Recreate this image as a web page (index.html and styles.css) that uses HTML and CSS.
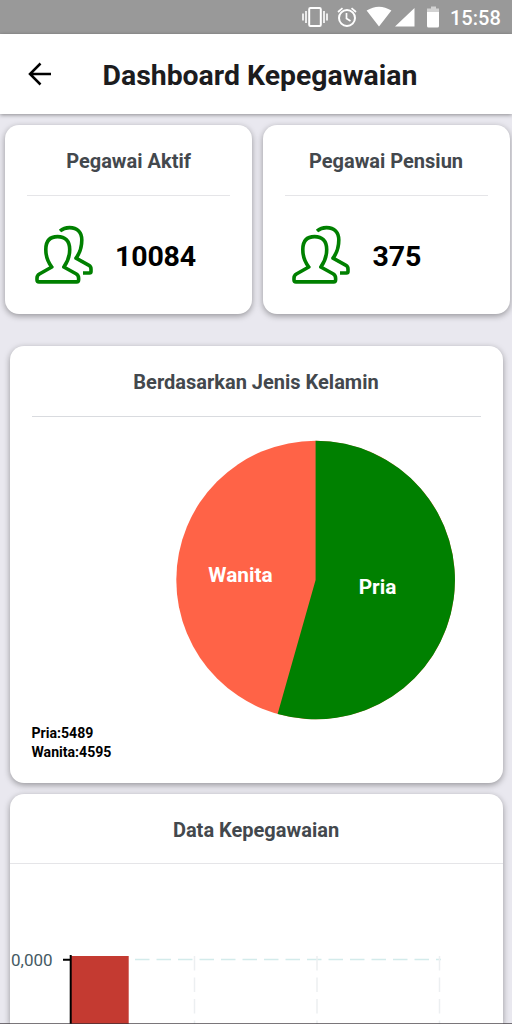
FILE: index.html
```html
<!DOCTYPE html>
<html lang="id">
<head>
<meta charset="utf-8">
<title>Dashboard Kepegawaian</title>
<link rel="stylesheet" href="styles.css">
</head>
<body>
<svg class="defs" width="0" height="0" aria-hidden="true">
  <symbol id="people" viewBox="0 0 70 70">
    <path d="M30 11C33 8.4 36 7.6 39.5 7.6C47.5 7.6 51.8 12.5 51.8 20C51.8 28 50.3 32.5 46 38.2L59 45.3Q61 46.5 61 49V51.5Q61 53 59.5 53H53"/>
    <path d="M21.8 47C17 41 15.8 36 15.8 29.5C15.8 21 20 16.6 27.6 16.6C35.2 16.6 39.7 21 39.7 29.5C39.7 36 38.3 41 33.8 47L46 53.8Q48.6 55.3 48.6 58V60Q48.6 61.9 46.6 61.9H9Q7 61.9 7 60V58Q7 55.5 9.4 54Z"/>
  </symbol>
</svg>
<header class="status">
  <svg class="status-icons" width="142" height="34" viewBox="0 0 142 34">
    <g fill="none" stroke="#fff">
      <rect x="9.2" y="8" width="11.6" height="18" rx="1.2" stroke-width="2"/>
      <path d="M6 11V23M3 13.5V20.5M24 11V23M27 13.5V20.5" stroke-width="1.6"/>
      <circle cx="47" cy="18" r="8" stroke-width="2"/>
      <path d="M46.5 13V18.5L50.5 21M38 12L42.5 8.2M51.5 8.2L56 12" stroke-width="1.7"/>
    </g>
    <path fill="#fff" d="M66.6 10.5Q79 2.8 91.4 10.5L79 26.5ZM95 26.5L114.5 8V26.5Z"/>
    <path fill="#d2d2d2" d="M131 6.5H136V8.5H139V12H127V8.5H131Z"/>
    <path fill="#fff" d="M127 12H139V26Q139 27.5 137.5 27.5H128.5Q127 27.5 127 26Z"/>
  </svg>
  <span class="clock">15:58</span>
</header>
<nav class="appbar">
  <svg class="back" width="24" height="24" viewBox="0 0 24 24"><path d="M23 12H2M12.5 1.5L2 12L12.5 22.5"/></svg>
  <h1>Dashboard Kepegawaian</h1>
</nav>
<main>
  <div class="stats">
    <section class="card stat">
      <h2>Pegawai Aktif</h2>
      <div class="stat-row"><svg class="people"><use href="#people"/></svg><strong>10084</strong></div>
    </section>
    <section class="card stat">
      <h2>Pegawai Pensiun</h2>
      <div class="stat-row"><svg class="people"><use href="#people"/></svg><strong>375</strong></div>
    </section>
  </div>
  <section class="card gender">
    <h2>Berdasarkan Jenis Kelamin</h2>
    <svg class="pie" width="280" height="280" viewBox="0 0 280 280">
      <circle cx="139.6" cy="140" r="139.3" fill="tomato"/>
      <path d="M139.6 140V.7A139.3 139.3 0 1 1 101.6 274Z" fill="green"/>
      <text x="64.5" y="142">Wanita</text>
      <text x="201.5" y="153.5">Pria</text>
    </svg>
    <p>Pria:5489<br>Wanita:4595</p>
  </section>
  <section class="card data">
    <h2>Data Kepegawaian</h2>
    <svg class="bars" width="493" height="160" viewBox="0 0 493 160">
      <path class="grid-h" d="M61.5 95.5H432"/>
      <path class="grid-v" d="M185.5 92V160M308 92V160M430.5 92V160"/>
      <rect x="61" y="92" width="58.7" height="68" fill="#c43a31"/>
      <path class="axis" d="M61.7 91V160M54 95.7H61"/>
      <text x="2" y="101.5">0,000</text>
    </svg>
  </section>
</main>
<div class="navline"></div>
</body>
</html>
```

FILE: styles.css
```css
* { box-sizing: border-box; margin: 0; }
body {
  width: 512px;
  height: 1024px;
  overflow: hidden;
  display: flex;
  flex-direction: column;
  position: relative;
  background: #e9e8ef;
  font-family: Roboto, sans-serif;
}
.defs { position: absolute; }
.status {
  height: 34px;
  flex: none;
  display: flex;
  align-items: center;
  padding-left: 300px;
  background: #999;
  color: #fff;
}
.clock { margin-left: 8px; padding-top: 2px; font-size: 20px; font-weight: 500; }
.appbar {
  height: 80px;
  flex: none;
  display: flex;
  align-items: center;
  padding-left: 28px;
  background: #fff;
  box-shadow: 0 1px 4px rgba(0, 0, 0, .4);
}
.back { fill: none; stroke: #000; stroke-width: 2.5; }
h1 { margin-left: 50.5px; padding-top: 3px; color: #1c1c1e; font-size: 28.4px; font-weight: 700; white-space: nowrap; }
main { flex: 1; min-height: 0; display: flex; flex-direction: column; padding-top: 11px; }
.stats { flex: none; display: grid; grid-template-columns: 247px 247px; gap: 10.5px; padding-left: 5px; }
.card {
  background: #fff;
  border-radius: 14px;
  box-shadow: 0 2px 6px rgba(0, 0, 0, .36);
}
h2 { color: #43484d; font-size: 20px; font-weight: 700; line-height: 24px; text-align: center; }
.stat { height: 189px; padding: 24px 22px 0; }
.stat h2, .gender h2 { height: 47px; border-bottom: 1px solid #e1e8ee; }
.stat h2 { border-color: #e5e5e8; }
.stat-row { display: flex; align-items: center; height: 119px; margin-left: 2.6px; }
.people { width: 70px; height: 70px; margin-bottom: 2px; fill: none; stroke: green; stroke-width: 3.6; stroke-linejoin: round; }
.stat-row strong { margin-left: 15.5px; padding-top: 1px; font-size: 28.5px; font-weight: 700; letter-spacing: -.2px; }
.gender { flex: none; height: 436.5px; margin: 32px 9.5px 0; padding: 24px 22px 0; }
.gender h2 { border-color: #d9dbdf; }
.pie { display: block; margin: 23px 0 0 144px; }
.pie text { fill: #fff; font-size: 20.8px; font-weight: 700; text-anchor: middle; }
.gender p { margin-top: 4px; font-size: 14.1px; font-weight: 700; line-height: 19px; }
.data { flex: 1; min-height: 0; margin: 11.5px 9.5px 0; padding-top: 24px; border-radius: 14px 14px 0 0; overflow: hidden; }
.data h2 { height: 46px; border-bottom: 1px solid #e5e5e8; }
.bars { display: block; margin-left: -.5px; }
.bars text { fill: #455a64; font-size: 17px; }
.grid-h { fill: none; stroke: #d3ebeb; stroke-width: 1.3; stroke-dasharray: 14.5 7; }
.grid-v { fill: none; stroke: #eceff1; stroke-width: 1.5; stroke-dasharray: 14.5 7; }
.axis { fill: none; stroke: #000; stroke-width: 2; }
.navline { position: absolute; left: 0; right: 0; bottom: 0; height: 1px; background: rgba(50, 45, 50, .65); }
```
